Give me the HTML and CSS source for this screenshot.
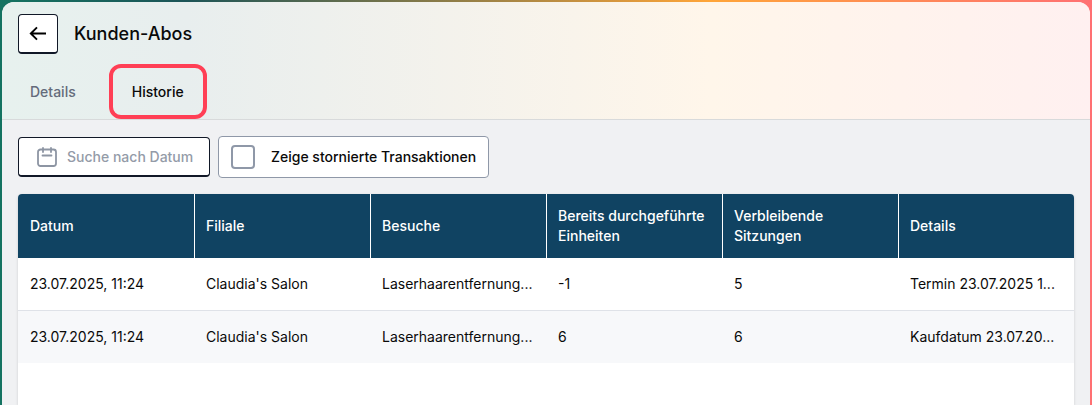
FILE: index.html
```html
<!DOCTYPE html>
<html lang="de">
	<head>
		<meta charset="utf-8" />
		<title>Kunden-Abos</title>
		<link rel="stylesheet" href="styles.css">
	</head>
	<body>
		<div class="panel">
			<header class="header">
				<div class="title-row">
					<button class="back" type="button" aria-label="Zurück">
						<svg width="20" height="20" viewBox="0 0 20 20" fill="none" stroke="#000" stroke-width="1.9">
							<path d="M18 9.5H3.2M9 3.3 2.8 9.5 9 15.7" />
						</svg>
					</button>
					<h1>Kunden-Abos</h1>
				</div>
				<nav class="tabs">
					<a class="tab" href="#details">Details</a>
					<a class="tab active" href="#historie">Historie</a>
				</nav>
			</header>

			<main class="content">
				<div class="filters">
					<label class="date-filter">
						<svg width="20" height="20" viewBox="0 0 20 20" fill="none" stroke="#8d95a3" stroke-width="1.8" stroke-linecap="round">
							<rect x="1" y="2.5" width="18" height="16.5" rx="2.5" />
							<path d="M6 1v4M14 1v4M5.5 8.5h9" />
						</svg>
						<input type="text" placeholder="Suche nach Datum" aria-label="Suche nach Datum" />
					</label>
					<label class="check-filter">
						<input type="checkbox" />
						<span>Zeige stornierte Transaktionen</span>
					</label>
				</div>

				<div class="table-card">
					<table>
						<thead>
							<tr>
								<th>Datum</th>
								<th>Filiale</th>
								<th>Besuche</th>
								<th>Bereits durchgeführte Einheiten</th>
								<th>Verbleibende Sitzungen</th>
								<th>Details</th>
							</tr>
						</thead>
						<tbody>
							<tr>
								<td>23.07.2025, 11:24</td>
								<td>Claudia's Salon</td>
								<td>Laserhaarentfernung...</td>
								<td>-1</td>
								<td>5</td>
								<td>Termin 23.07.2025 1...</td>
							</tr>
							<tr>
								<td>23.07.2025, 11:24</td>
								<td>Claudia's Salon</td>
								<td>Laserhaarentfernung...</td>
								<td>6</td>
								<td>6</td>
								<td>Kaufdatum 23.07.20...</td>
							</tr>
						</tbody>
					</table>
				</div>
			</main>
		</div>
	</body>
</html>
```

FILE: styles.css
```css
* {
	box-sizing: border-box;
}

body {
	margin: 0;
	height: 100vh;
	padding: 2px 2px 0;
	overflow: hidden;
	font-family: Inter, "Liberation Sans", sans-serif;
	font-size: 14px;
	line-height: 20px;
	color: #0a0a0a;
	background: linear-gradient(90deg, #147361, #1c5457 17%, #ffa538 65%, #ff7073);
}

.panel {
	display: flex;
	flex-direction: column;
	height: 100%;
	border-radius: 12px 12px 0 0;
	overflow: hidden;
	background: #f0f1f3;
}

/* header */
.header {
	display: flex;
	flex-direction: column;
	gap: 10px;
	padding: 12px 16px 0;
	border-bottom: 1px solid #d8dadb;
	background: linear-gradient(90deg, #e7f1ee, #e8eeee 17%, #fff6ea 65%, #fff0f0);
}
.title-row {
	display: flex;
	align-items: center;
	gap: 16px;
}
.back {
	display: flex;
	align-items: center;
	justify-content: center;
	width: 40px;
	height: 40px;
	padding: 0;
	border: 1px solid #111827;
	border-bottom-width: 2px;
	border-radius: 4px;
	background: #fff;
}
h1 {
	margin: 0;
	font-size: 18px;
	font-weight: 500;
	line-height: 24px;
}
.tabs {
	display: flex;
	align-items: center;
	gap: 21px;
}
.tab {
	padding: 0 12px;
	font-weight: 500;
	color: #646b7b;
	text-decoration: none;
}
.tab.active {
	padding: 14px 19px 13px;
	border: 4px solid #ff3f55;
	border-radius: 12px;
	color: #0a0a0a;
}

/* filters */
.content {
	display: flex;
	flex: 1;
	flex-direction: column;
	gap: 16px;
	padding: 16px 16px 0;
}
.filters {
	display: flex;
	align-items: center;
	gap: 8px;
}
.date-filter,
.check-filter {
	display: flex;
	align-items: center;
	border-radius: 4px;
	background: #fff;
	font-weight: 500;
}
.date-filter {
	gap: 10px;
	width: 192px;
	height: 40px;
	padding: 0 12px 0 18px;
	border: 1px solid #111827;
	border-bottom-width: 2px;
}
.date-filter svg {
	flex: none;
}
.date-filter input {
	flex: 1;
	min-width: 0;
	padding: 0;
	border: none;
	outline: none;
	background: none;
	font: inherit;
}
.date-filter input::placeholder {
	color: #949ba8;
	opacity: 1;
}
.check-filter {
	gap: 16px;
	height: 42px;
	padding: 0 12px;
	border: 1px solid #8f98a8;
}
.check-filter input {
	appearance: none;
	width: 24px;
	height: 24px;
	margin: 0;
	border: 2px solid #8f98a8;
	border-radius: 4px;
	background: #fff;
}

/* table */
.table-card {
	flex: 1;
	border-radius: 4px 4px 0 0;
	overflow: hidden;
	background: #fff;
	box-shadow: 0 1px 3px rgba(0, 0, 0, 0.15);
}
table {
	width: 100%;
	table-layout: fixed;
	border-collapse: separate;
	border-spacing: 0;
}
th,
td {
	padding: 0 12px;
	text-align: left;
}
th {
	height: 64px;
	background: #104362;
	color: #fff;
	font-weight: 500;
}
th + th {
	padding-left: 11px;
	border-left: 1px solid #fff;
}
td {
	height: 52px;
	overflow: hidden;
	text-overflow: ellipsis;
	white-space: nowrap;
}
tbody tr:nth-child(even) td {
	height: 53px;
	border-top: 1px solid #dfe2e8;
	background: #f7f8fa;
}
```
